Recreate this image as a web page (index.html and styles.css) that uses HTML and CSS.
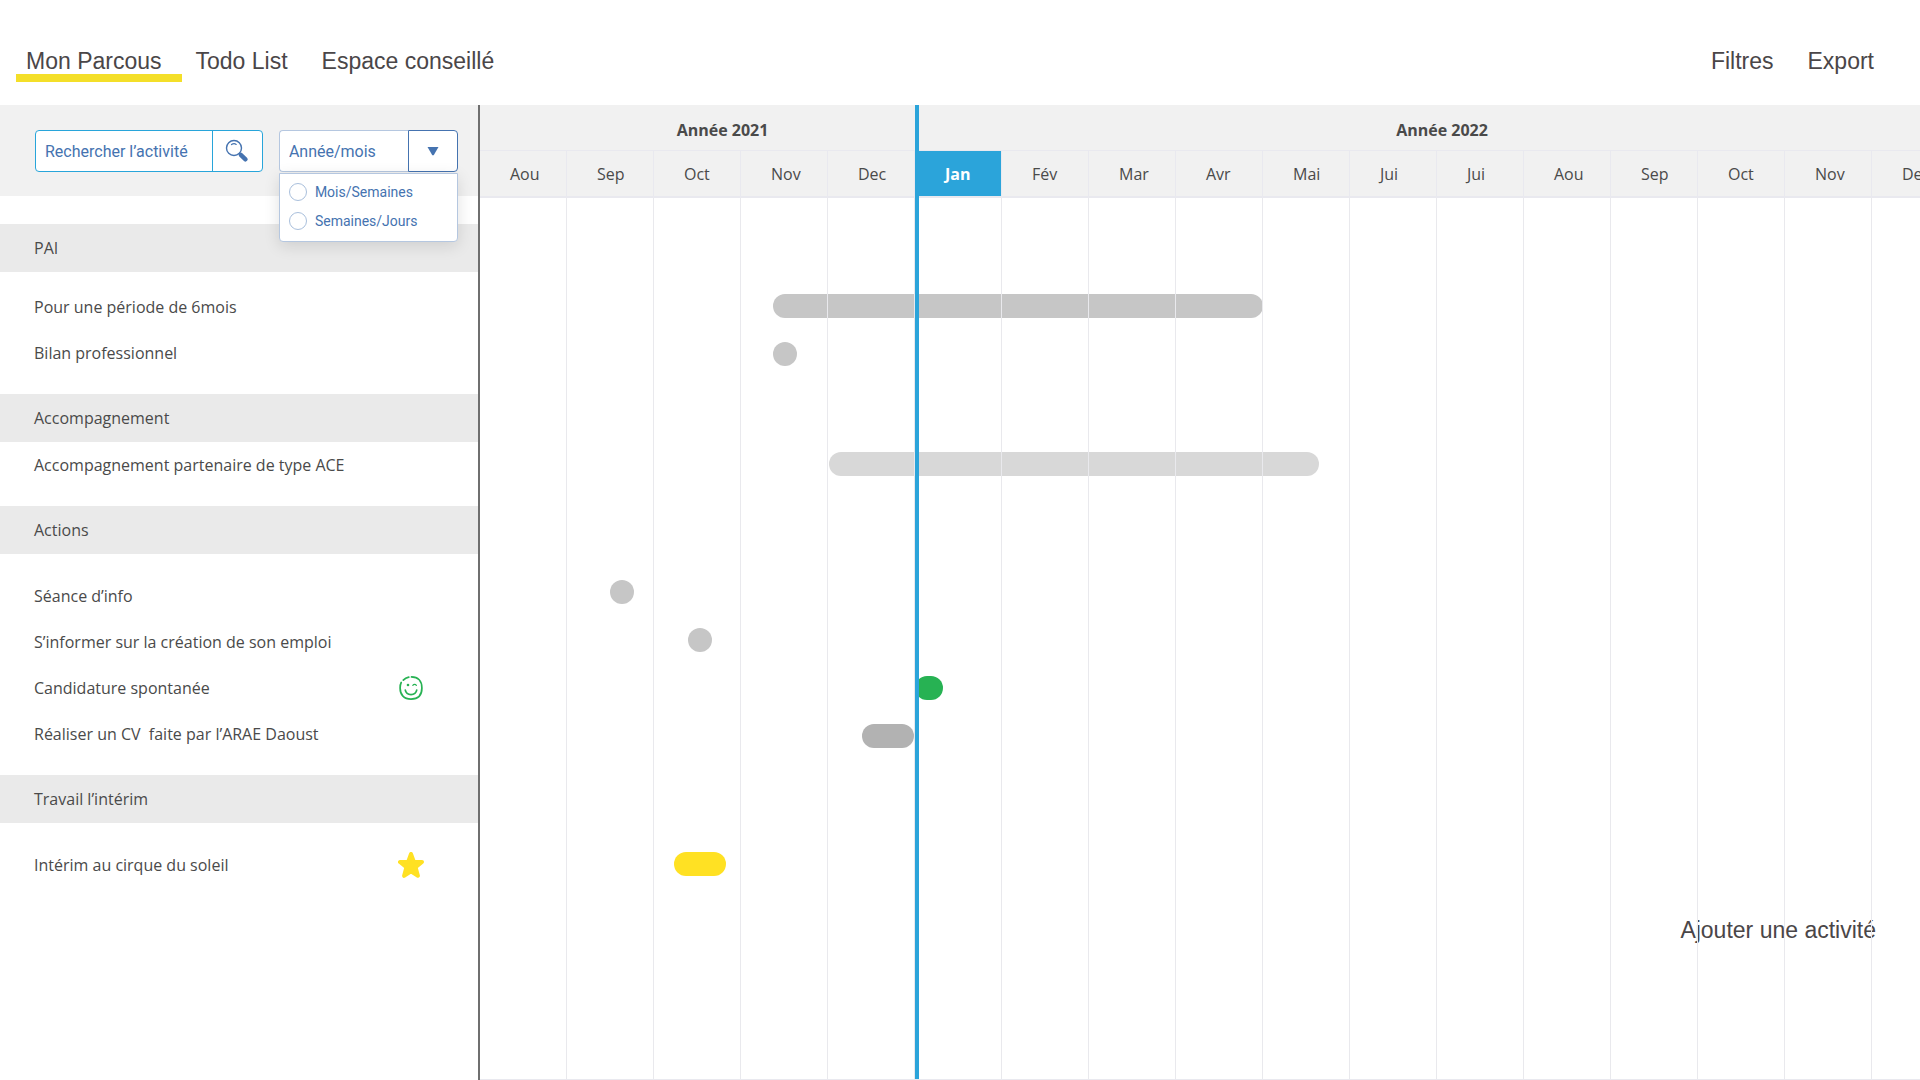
FILE: index.html
```html
<!DOCTYPE html>
<html lang="fr">
<head>
    <meta charset="UTF-8">
    <meta name="viewport" content="width=device-width, initial-scale=1.0">
    <title>Mon Parcous</title>
    <link rel="stylesheet" href="styles.css">
</head>
<body>

<header>
    <nav>
        <a href="#parcours" class="active">Mon Parcous</a>
        <a href="#todo">Todo List</a>
        <a href="#espace">Espace conseillé</a>
    </nav>
    <div class="actions">
        <button type="button">Filtres</button>
        <button type="button">Export</button>
    </div>
</header>

<main class="board">
    <aside class="sidebar">
        <div class="toolbar">
            <form class="search">
                <input type="text" placeholder="Rechercher l’activité" aria-label="Rechercher l’activité">
                <button type="submit" aria-label="Rechercher">
                    <svg width="24" height="24" viewBox="0 0 24 24" fill="none" stroke="#4573b0">
                        <circle cx="9" cy="9" r="7.5" stroke-width="1.4"/>
                        <path d="M6.5 5.6C8 4.6 10 4.6 11.200 5.400" stroke-width="1.2" stroke-linecap="round"/>
                        <path d="M14.300 14.300L16 16" stroke-width="2"/>
                        <path d="M15.800 15.800L20.500 20.300" stroke-width="4.400" stroke-linecap="round"/>
                    </svg>
                </button>
            </form>
            <div class="scale">
                <select aria-label="Échelle">
                    <option>Année/mois</option>
                </select>
                <button type="button" aria-label="Ouvrir">
                    <svg width="12" height="10" viewBox="0 0 12 10">
                        <path d="M0.500 1h11L6.700 9.200h-1.400z" fill="#4573b0"/>
                    </svg>
                </button>
                <div class="scale-menu">
                    <label><input type="radio" name="scale"> Mois/Semaines</label>
                    <label><input type="radio" name="scale"> Semaines/Jours</label>
                </div>
            </div>
        </div>

        <section class="group compact">
            <h2>PAI</h2>
            <ul>
                <li>Pour une période de 6mois</li>
                <li>Bilan professionnel</li>
            </ul>
        </section>
        <section class="group tight">
            <h2>Accompagnement</h2>
            <ul>
                <li>Accompagnement partenaire de type ACE</li>
            </ul>
        </section>
        <section class="group">
            <h2>Actions</h2>
            <ul>
                <li>Séance d’info</li>
                <li>S’informer sur la création de son emploi</li>
                <li>
                    Candidature spontanée
                    <svg width="26" height="26" viewBox="0 0 26 26" fill="none" stroke="#27b253" stroke-linecap="round">
                        <path d="M13.500 1.900C20 1.900 23.900 6 23.900 13S20 24.100 13 24.100 2.100 20 2.100 13c0-2.200.3-4 1.100-5.500" stroke-width="1.700"/>
                        <path d="M5.300 5.100C6.700 3.500 8.500 2.500 10.800 2.100" stroke-width="1.700"/>
                        <path d="M7.300 15.200c1 5.800 10.400 5.800 11.400 0" stroke-width="1.700"/>
                        <path d="M14.800 10.300c1-1.200 2.700-1.200 3.600 0" stroke-width="1.200"/>
                        <circle cx="10" cy="10" r="1.300" fill="#27b253" stroke="none"/>
                    </svg>
                </li>
                <li>Réaliser un CV&nbsp; faite par l’ARAE Daoust</li>
            </ul>
        </section>
        <section class="group">
            <h2>Travail l’intérim</h2>
            <ul>
                <li>
                    Intérim au cirque du soleil
                    <svg width="26" height="26" viewBox="0 0 26 26" fill="#ffe123" stroke="#ffe123" stroke-width="4" stroke-linejoin="round">
                        <path d="M13 2L15.800 9.700L24 10L17.600 15.200L19.900 23.800L13 19.300L6.100 23.800L8.400 15.200L2 10L10.200 9.700Z"/>
                    </svg>
                </li>
            </ul>
        </section>
    </aside>

    <div class="timeline">
        <div class="years">
            <div class="year" style="--months: 5">Année 2021</div>
            <div class="year current" style="--months: 12">Année 2022</div>
        </div>
        <div class="months">
            <span>Aou</span>
            <span>Sep</span>
            <span>Oct</span>
            <span>Nov</span>
            <span>Dec</span>
            <span class="current">Jan</span>
            <span>Fév</span>
            <span>Mar</span>
            <span>Avr</span>
            <span>Mai</span>
            <span>Jui</span>
            <span>Jui</span>
            <span>Aou</span>
            <span>Sep</span>
            <span>Oct</span>
            <span>Nov</span>
            <span>Dec</span>
        </div>

        <!-- start and length of each bar are given in months -->
        <div class="chart">
            <div class="lanes first">
                <div class="lane"><div class="bar" style="--start: 3.37; --length: 5.63"></div></div>
                <div class="lane"><div class="bar dot" style="--start: 3.37"></div></div>
            </div>
            <div class="lanes second">
                <div class="lane"><div class="bar light" style="--start: 4.01; --length: 5.63"></div></div>
            </div>
            <div class="lanes">
                <div class="lane"><div class="bar dot" style="--start: 1.49"></div></div>
                <div class="lane"><div class="bar dot" style="--start: 2.39"></div></div>
                <div class="lane"><div class="bar green" style="--start: 5; --length: 0.32"></div></div>
                <div class="lane"><div class="bar dark" style="--start: 4.39; --length: 0.6"></div></div>
            </div>
            <div class="lanes">
                <div class="lane"><div class="bar yellow" style="--start: 2.23; --length: 0.6"></div></div>
            </div>
            <button type="button" class="add">Ajouter une activité</button>
        </div>
        <div class="today"></div>
    </div>
</main>

</body>
</html>
```

FILE: styles.css
```css
* {
    margin: 0;
    padding: 0;
    box-sizing: border-box;
}

body {
    --month: 87px;
    display: flex;
    flex-direction: column;
    min-height: 100vh;
    background: #fff;
    color: #4a4a4a;
    font: 16px/24px "Open Sans", sans-serif;
}

button {
    background: none;
    border: none;
    color: inherit;
    font: inherit;
    cursor: pointer;
}

header {
    display: flex;
    justify-content: space-between;
    padding: 47px 46px 30px 26px;
    color: #4a4648;
    font: 23px/28px "Liberation Sans", Arial, sans-serif;
}

nav,
.actions {
    display: flex;
    gap: 34px;
}

nav a {
    position: relative;
    color: inherit;
    text-decoration: none;
}

nav a.active::after {
    content: "";
    position: absolute;
    left: -10px;
    right: -20px;
    bottom: -7px;
    height: 8px;
    background: #f4df29;
}

.board {
    flex: 1;
    display: grid;
    grid-template-columns: 25% 1fr;
}

/* Sidebar */

.sidebar {
    border-right: 2px solid #6f6f6f;
}

.toolbar {
    display: flex;
    gap: 16px;
    height: 91px;
    margin-bottom: 28px;
    padding: 25px 20px 24px 35px;
    background: #f1f1f1;
    color: #4573b0;
    font: 16px/24px Roboto, sans-serif;
}

.search {
    display: flex;
    flex: 227 1 0;
    min-width: 0;
    background: #fff;
    border: 1px solid #28a5da;
    border-radius: 4px;
}

.search input {
    flex: 1;
    min-width: 0;
    padding: 2px 0 0 9px;
    background: none;
    border: none;
    color: inherit;
    font: inherit;
}

.search input::placeholder {
    color: inherit;
    opacity: 1;
}

.search button {
    display: flex;
    align-items: center;
    justify-content: center;
    width: 50px;
    border-left: 1px solid #28a5da;
}

.scale {
    position: relative;
    display: flex;
    flex: 180 1 0;
    min-width: 0;
}

.scale select {
    appearance: none;
    flex: 1;
    min-width: 0;
    padding: 2px 0 0 9px;
    background: #fff;
    border: 1px solid #b5c7e0;
    border-right: none;
    border-radius: 4px 0 0 4px;
    color: inherit;
    font: inherit;
}

.scale button {
    display: flex;
    align-items: center;
    justify-content: center;
    width: 50px;
    background: #fff;
    border: 1px solid #4573b0;
    border-radius: 0 4px 4px 0;
}

.scale-menu {
    position: absolute;
    top: 43px;
    left: 0;
    right: 0;
    z-index: 2;
    padding: 3px 9px 6px;
    background: #fff;
    border: 1px solid #b5c7e0;
    border-radius: 0 0 4px 4px;
    box-shadow: 0 4px 16px rgba(0, 0, 0, 0.12);
    font-size: 14px;
}

.scale-menu label {
    display: flex;
    align-items: center;
    gap: 8px;
    height: 29px;
}

.scale-menu input {
    appearance: none;
    flex: none;
    width: 18px;
    height: 18px;
    border: 1px solid #a9bfdc;
    border-radius: 50%;
}

.scale-menu input:checked {
    background: #4573b0;
}

.group h2 {
    height: 48px;
    padding-left: 34px;
    background: #eaeaea;
    font-size: 16px;
    font-weight: normal;
    line-height: 48px;
}

.group ul {
    padding: 19px 0 18px;
    list-style: none;
}

.group.compact ul {
    padding-top: 12px;
}

.group.tight ul {
    padding-top: 0;
}

.group li {
    display: flex;
    align-items: center;
    justify-content: space-between;
    height: 46px;
    padding: 0 54px 0 34px;
}

/* Timeline */

.timeline {
    position: relative;
    display: flex;
    flex-direction: column;
    overflow: hidden;
    border-bottom: 1px solid #e9e9ef;
}

.years,
.months {
    display: flex;
    background: #f1f1f1;
}

.years {
    height: 46px;
    border-bottom: 1px solid #e9e9ef;
}

.year {
    flex: none;
    width: calc(var(--month) * var(--months));
    padding-left: 50px;
    font-weight: bold;
    line-height: 50px;
    text-align: center;
}

.year.current {
    padding-left: 10px;
}

.months {
    height: 47px;
    border-bottom: 2px solid #e9e9ef;
}

.months span {
    flex: none;
    width: var(--month);
    padding-left: 30px;
    border-right: 1px solid #e9e9ef;
    line-height: 46px;
}

.months .current {
    background: #2ba4da;
    color: #fff;
    font-weight: bold;
}

.chart {
    position: relative;
    flex: 1;
}

/* month lines run over the bars */
.chart::after {
    content: "";
    position: absolute;
    inset: 0;
    background: repeating-linear-gradient(to right, transparent 0, transparent 86px, #e9e9ed 86px, #e9e9ed 87px);
    pointer-events: none;
}

.lanes {
    padding-top: 80px;
}

.lanes.first {
    padding-top: 84px;
}

.lanes.second {
    padding-top: 62px;
}

.lane {
    display: flex;
    align-items: center;
    height: 48px;
}

.bar {
    width: calc(var(--month) * var(--length));
    height: 24px;
    margin-left: calc(var(--month) * var(--start));
    background: #c6c6c6;
    border-radius: 12px;
}

.bar.dot {
    width: 24px;
}

.bar.light {
    background: #d8d8d8;
}

.bar.dark {
    background: #b2b2b2;
}

.bar.green {
    background: #27b253;
}

.bar.yellow {
    background: #ffe123;
}

.add {
    position: absolute;
    right: 44px;
    bottom: 135px;
    color: #4a4648;
    font: 23px/28px "Liberation Sans", Arial, sans-serif;
}

.today {
    position: absolute;
    top: 0;
    bottom: 0;
    left: calc(var(--month) * 5);
    width: 4px;
    background: #2ba4da;
}
```
